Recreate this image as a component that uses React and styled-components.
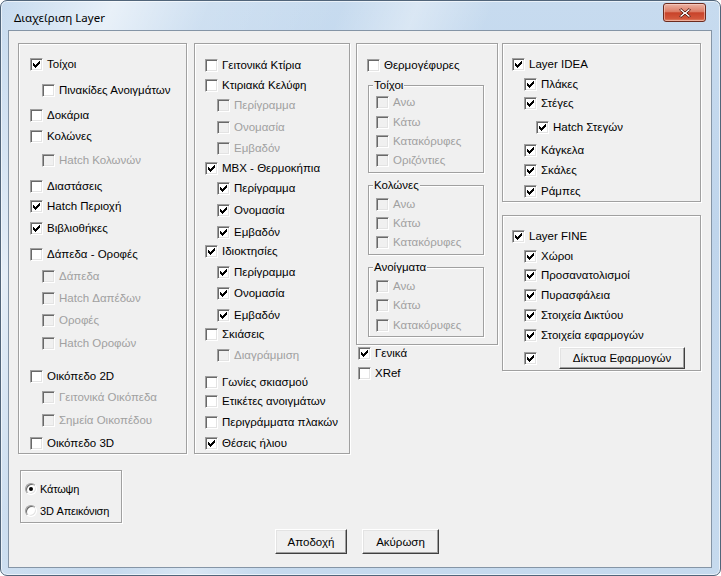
import React from 'react';
import styled, { createGlobalStyle } from 'styled-components';

const GlobalStyle = createGlobalStyle`
  html, body {
    margin: 0;
    padding: 0;
    background: #ffffff;
  }
  body {
    font-family: "Liberation Sans", Arial, sans-serif;
  }
`;

const Window = styled.div`
  box-sizing: border-box;
  width: 721px;
  height: 576px;
  border: 1px solid #51657a;
  border-radius: 7px;
  overflow: hidden;
  display: flex;
  flex-direction: column;
  background:
    linear-gradient(112deg, rgba(255, 255, 255, 0) 0%, rgba(255, 255, 255, 0.6) 12%, rgba(255, 255, 255, 0.15) 22%, rgba(255, 255, 255, 0) 36%, rgba(255, 255, 255, 0.35) 44%, rgba(255, 255, 255, 0) 52%),
    linear-gradient(180deg, #c7dbef 0%, #bfd5ec 40%, #c6daee 100%);
  box-shadow: inset 0 0 0 1px rgba(255, 255, 255, 0.6);
`;

const TitleBar = styled.div`
  height: 29px;
  flex: none;
  display: flex;
  justify-content: space-between;
  padding: 0 14px 0 13px;
`;

const Title = styled.div`
  font-family: "Noto Sans", "Open Sans", sans-serif;
  font-size: 11.5px;
  color: #000;
  line-height: 16px;
  margin-top: 9px;
`;

const CloseButton = styled.div`
  box-sizing: border-box;
  width: 43px;
  height: 19px;
  margin-top: 2px;
  border: 1px solid #6b2b1f;
  border-radius: 3px;
  background: linear-gradient(180deg, #eab3a4 0%, #dc7c66 45%, #c8432a 52%, #d2563b 85%, #e08a6c 100%);
  box-shadow: inset 0 0 0 1px rgba(255, 220, 210, 0.5);
  display: flex;
  align-items: center;
  justify-content: center;
`;

const Client = styled.div`
  flex: 1;
  margin: 0 8px 7px 7px;
  border: 1px solid #8595a6;
  background: #f0f0f0;
  display: flex;
  flex-direction: column;
`;

const TopRow = styled.div`
  display: flex;
  align-items: flex-start;
  margin-top: 12px;
  padding-left: 9px;
`;

const Column = styled.div`
  display: flex;
  flex-direction: column;
  width: ${p => p.$w}px;
  margin-left: ${p => p.$ml || 0}px;
`;

const GroupBox = styled.div`
  box-sizing: border-box;
  width: ${p => p.$w}px;
  height: ${p => p.$h}px;
  margin-left: ${p => p.$ml || 0}px;
  margin-top: ${p => p.$mt || 0}px;
  padding-left: ${p => p.$pad}px;
  border: 1px solid #a0a0a0;
  box-shadow: inset 1px 1px 0 #ffffff, 1px 1px 0 #ffffff;
  display: flex;
  flex-direction: column;
  flex: none;
`;

const SubFrame = styled.div`
  box-sizing: border-box;
  width: 116px;
  height: ${p => p.$h}px;
  margin-top: ${p => p.$mt}px;
  margin-left: 1px;
  padding-left: 7px;
  border: 1px solid #a0a0a0;
  box-shadow: inset 1px 1px 0 #ffffff, 1px 1px 0 #ffffff;
  display: flex;
  flex-direction: column;
`;

const Caption = styled.span`
  display: block;
  width: fit-content;
  margin: -8px 0 0 -3px;
  padding: 0 1px;
  background: #f0f0f0;
  font-size: 11.5px;
  line-height: 14px;
  color: #000;
`;

const Row = styled.label`
  display: flex;
  align-items: center;
  gap: 4px;
  height: ${p => p.$h}px;
  margin-top: ${p => p.$mt}px;
  padding-left: ${p => p.$indent}px;
  font-size: 11.5px;
  white-space: nowrap;
  color: ${p => (p.$disabled ? '#a0a0a0' : '#000000')};
`;

const Box = styled.span`
  box-sizing: border-box;
  width: 13px;
  height: 13px;
  flex: none;
  border: 1px solid;
  border-color: #a0a0a0 #ffffff #ffffff #a0a0a0;
  box-shadow: inset 1px 1px 0 #696969, inset -1px -1px 0 #e3e3e3;
  background: ${p => (p.$disabled ? '#f0f0f0' : '#ffffff')};
  svg {
    display: block;
  }
`;

const RadioGroup = styled.div`
  box-sizing: border-box;
  width: 102px;
  height: 53px;
  margin: 16px 0 0 11px;
  padding-left: 4px;
  border: 1px solid #a0a0a0;
  box-shadow: inset 1px 1px 0 #ffffff, 1px 1px 0 #ffffff;
  display: flex;
  flex-direction: column;
`;

const RadioRow = styled.label`
  display: flex;
  align-items: center;
  gap: 3px;
  height: 16px;
  margin-top: ${p => p.$mt}px;
  font-size: 11px;
  letter-spacing: -0.2px;
  white-space: nowrap;
`;

const Radio = styled.span`
  box-sizing: border-box;
  width: 12px;
  height: 12px;
  border-radius: 50%;
  border: 1px solid;
  border-color: #a0a0a0 #ffffff #ffffff #a0a0a0;
  box-shadow: inset 1px 1px 0 #696969, inset -1px -1px 0 #e3e3e3;
  background: #ffffff;
  display: flex;
  align-items: center;
  justify-content: center;
  &::after {
    content: '';
    width: 4px;
    height: 4px;
    border-radius: 50%;
    background: ${p => (p.$on ? '#000' : 'transparent')};
  }
`;

const ButtonRow = styled.div`
  display: flex;
  gap: 15px;
  margin: 6px 0 0 266px;
`;

const Button = styled.button`
  box-sizing: border-box;
  width: ${p => p.$w}px;
  height: ${p => p.$h || 25}px;
  margin-left: ${p => p.$ml || 0}px;
  padding: 0;
  background: #f0f0f0;
  border: 1px solid;
  border-color: #ffffff #404040 #404040 #ffffff;
  box-shadow: inset -1px -1px 0 #a0a0a0, inset 1px 1px 0 #e3e3e3;
  font-family: "Liberation Sans", Arial, sans-serif;
  font-size: 11.5px;
  color: #000;
`;

const CHECK = [
  [8, 2, 1], [7, 3, 2], [2, 4, 1], [6, 4, 3], [2, 5, 2], [5, 5, 3], [2, 6, 5], [3, 7, 3], [4, 8, 1],
];

const CheckBox = ({ checked, disabled }) => (
  <Box $disabled={disabled}>
    {checked && (
      <svg width="11" height="11" viewBox="0 0 11 11" shapeRendering="crispEdges">
        {CHECK.map(([x, y, w]) => (
          <rect key={`${x}-${y}`} x={x} y={y} width={w} height="1" fill={disabled ? '#a0a0a0' : '#000'} />
        ))}
      </svg>
    )}
  </Box>
);

// rows are given by the y of their centre in the dialog; margins come from the gaps
const place = (items, startY) => {
  let prev = startY;
  return items.map(([label, level, state, y, h = 16]) => {
    const top = y - h / 2;
    const mt = Math.round(top - prev);
    prev = top + h;
    return { label, level, state, mt, h };
  });
};

const Items = ({ items, startY, step = 12, children }) =>
  place(items, startY).map((it, i) => (
    <Row key={i} $mt={it.mt} $h={it.h} $indent={it.level * step} $disabled={it.state === 'd'}>
      <CheckBox checked={it.state === 'c'} disabled={it.state === 'd'} />
      {it.label}
      {children && i === items.length - 1 ? children : null}
    </Row>
  ));

const group1 = [
  ['Τοίχοι', 0, 'c', 64],
  ['Πινακίδες Ανοιγμάτων', 1, '', 90],
  ['Δοκάρια', 0, '', 115],
  ['Κολώνες', 0, '', 136],
  ['Hatch Κολωνών', 1, 'd', 160],
  ['Διαστάσεις', 0, '', 186],
  ['Hatch Περιοχή', 0, 'c', 206],
  ['Βιβλιοθήκες', 0, 'c', 228],
  ['Δάπεδα - Οροφές', 0, '', 254],
  ['Δάπεδα', 1, 'd', 276],
  ['Hatch Δαπέδων', 1, 'd', 298],
  ['Οροφές', 1, 'd', 320],
  ['Hatch Οροφών', 1, 'd', 343],
  ['Οικόπεδο 2D', 0, '', 376],
  ['Γειτονικά Οικόπεδα', 1, 'd', 397],
  ['Σημεία Οικοπέδου', 1, 'd', 420],
  ['Οικόπεδο 3D', 0, '', 443],
];

const group2 = [
  ['Γειτονικά Κτίρια', 0, '', 65],
  ['Κτιριακά Κελύφη', 0, '', 85],
  ['Περίγραμμα', 1, 'd', 105],
  ['Ονομασία', 1, 'd', 127],
  ['Εμβαδόν', 1, 'd', 148],
  ['ΜΒΧ - Θερμοκήπια', 0, 'c', 168],
  ['Περίγραμμα', 1, 'c', 188],
  ['Ονομασία', 1, 'c', 210],
  ['Εμβαδόν', 1, 'c', 232],
  ['Ιδιοκτησίες', 0, 'c', 251],
  ['Περίγραμμα', 1, 'c', 272],
  ['Ονομασία', 1, 'c', 293],
  ['Εμβαδόν', 1, 'c', 315],
  ['Σκιάσεις', 0, '', 334],
  ['Διαγράμμιση', 1, 'd', 355],
  ['Γωνίες σκιασμού', 0, '', 382],
  ['Ετικέτες ανοιγμάτων', 0, '', 401],
  ['Περιγράμματα πλακών', 0, '', 422],
  ['Θέσεις ήλιου', 0, 'c', 443],
];

const frames = [
  { title: 'Τοίχοι', top: 85, h: 88, rows: [['Ανω', 0, 'd', 103], ['Κάτω', 0, 'd', 123], ['Κατακόρυφες', 0, 'd', 142], ['Οριζόντιες', 0, 'd', 161]] },
  { title: 'Κολώνες', top: 185, h: 70, rows: [['Ανω', 0, 'd', 205], ['Κάτω', 0, 'd', 224], ['Κατακόρυφες', 0, 'd', 243]] },
  { title: 'Ανοίγματα', top: 267, h: 70, rows: [['Ανω', 0, 'd', 287], ['Κάτω', 0, 'd', 306], ['Κατακόρυφες', 0, 'd', 326]] },
];

const group4 = [
  ['Layer IDEA', 0, 'c', 64],
  ['Πλάκες', 1, 'c', 84],
  ['Στέγες', 1, 'c', 103],
  ['Hatch Στεγών', 2, 'c', 127],
  ['Κάγκελα', 1, 'c', 150],
  ['Σκάλες', 1, 'c', 170],
  ['Ράμπες', 1, 'c', 191],
];

const group5 = [
  ['Layer FINE', 0, 'c', 236],
  ['Χώροι', 1, 'c', 256],
  ['Προσανατολισμοί', 1, 'c', 275],
  ['Πυρασφάλεια', 1, 'c', 295],
  ['Στοιχεία Δικτύου', 1, 'c', 315],
  ['Στοιχεία εφαρμογών', 1, 'c', 335],
  ['', 1, 'c', 358, 22],
];

const CloseGlyph = () => (
  <svg width="14" height="12" viewBox="0 0 14 12">
    <path d="M3 1.5 L7 5 L11 1.5 L12.5 3 L8.8 6 L12.5 9 L11 10.5 L7 7.2 L3 10.5 L1.5 9 L5.2 6 L1.5 3 Z"
      fill="#ffffff" stroke="#5a1f14" strokeWidth="1" strokeLinejoin="round" />
  </svg>
);

export default function App() {
  return (
    <>
      <GlobalStyle />
      <Window>
        <TitleBar>
          <Title>Διαχείριση Layer</Title>
          <CloseButton>
            <CloseGlyph />
          </CloseButton>
        </TitleBar>
        <Client>
          <TopRow>
            <GroupBox $w={169} $h={411} $pad={11}>
              <Items items={group1} startY={44} />
            </GroupBox>
            <GroupBox $w={156} $h={411} $pad={10} $ml={7}>
              <Items items={group2} startY={44} />
            </GroupBox>
            <Column $w={142} $ml={6}>
              <GroupBox $w={142} $h={302} $pad={10}>
                <Items items={[['Θερμογέφυρες', 0, '', 65]]} startY={44} />
                {frames.map((f, i) => {
                  const prevBottom = i === 0 ? 73 : frames[i - 1].top + frames[i - 1].h;
                  return (
                    <SubFrame key={f.title} $h={f.h} $mt={f.top - prevBottom}>
                      <Caption>{f.title}</Caption>
                      <Items items={f.rows} startY={f.top + 8} />
                    </SubFrame>
                  );
                })}
              </GroupBox>
              <Column $w={140} $ml={2}>
                <Items items={[['Γενικά', 0, 'c', 353], ['XRef', 0, '', 373]]} startY={345} />
              </Column>
            </Column>
            <Column $w={199} $ml={4}>
              <GroupBox $w={199} $h={159} $pad={9}>
                <Items items={group4} startY={44} />
              </GroupBox>
              <GroupBox $w={199} $h={156} $pad={9} $mt={13}>
                <Items items={group5} startY={216}>
                  <Button $w={126} $h={22} $ml={18}>Δίκτυα Εφαρμογών</Button>
                </Items>
              </GroupBox>
            </Column>
          </TopRow>
          <RadioGroup>
            <RadioRow $mt={10}>
              <Radio $on />
              Κάτωψη
            </RadioRow>
            <RadioRow $mt={6}>
              <Radio />
              3D Απεικόνιση
            </RadioRow>
          </RadioGroup>
          <ButtonRow>
            <Button $w={72}>Αποδοχή</Button>
            <Button $w={77}>Ακύρωση</Button>
          </ButtonRow>
        </Client>
      </Window>
    </>
  );
}
